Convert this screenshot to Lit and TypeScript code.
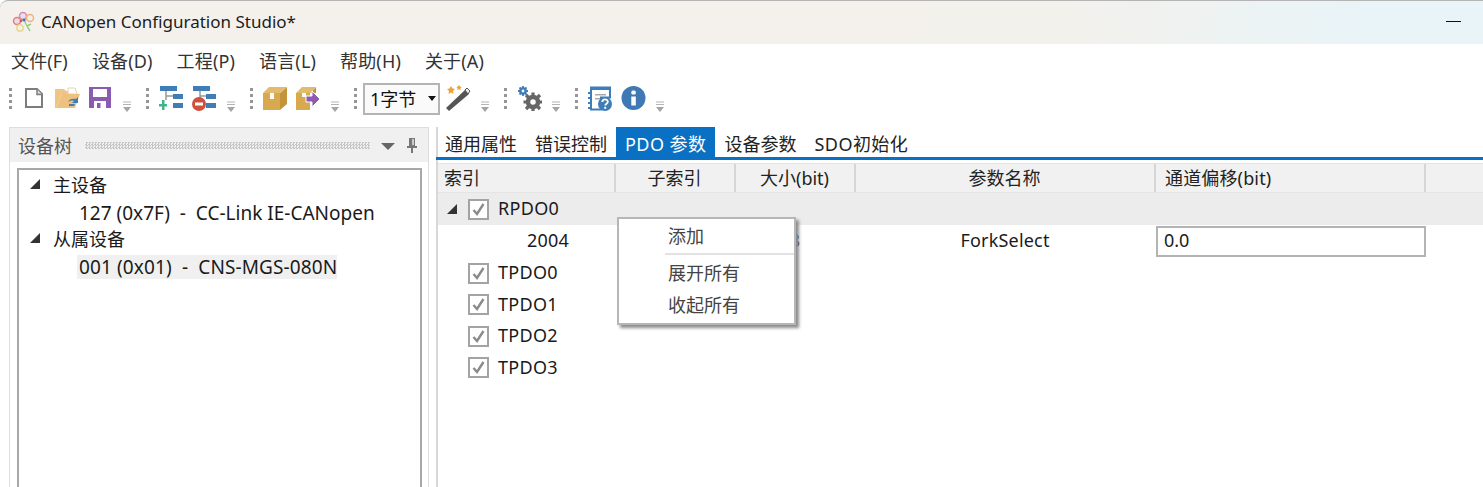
import { LitElement, html, css, svg } from "lit";
import { customElement } from "lit/decorators.js";

const ICONS: Record<string, unknown> = {
  doc: svg`<path d="M4 4h11l5 5v13H4z" fill="#fff" stroke="#7d7d7d" stroke-width="2"/><path d="M15 4v5.500h5" fill="#d8d8d8" stroke="#7d7d7d" stroke-width="1.500"/>`,
  open: svg`<path d="M0 10V4h9l2 2h9v3H7L1 23H0z" fill="#eec584"/><path d="M13 3h7l2 6h-9z" fill="#fff" stroke="#e6d2ac"/><path d="M1 23 7 9h18l-5 14z" fill="#eec27e"/><path d="M13 17c1-3 5-4 8-3l2-2v6h-6l2-2c-2-1-4 0-6 1zM14 19h6l-1 2h-5z" fill="#3f7fb5"/>`,
  save: svg`<path d="M1 2h22v21H1z" fill="#8a5bb0"/><path d="M5 4h14v8H5z" fill="#fff"/><path d="M6 16h12v7H6z" fill="#fff"/><path d="M9 18h3.500v5H9z" fill="#8a5bb0"/>`,
  add: svg`<path d="M1 1h17v5H1zM14 9h10v5H14zM14 18h10v5H14z" fill="#3e7db8"/><path d="M7 6v5h7M7 11v4" fill="none" stroke="#999" stroke-width="1.500"/><path d="M3 15h2.500v4H8v2.500H5.500V25H3v-3.500H0V19h3z" fill="#3fb58a"/>`,
  del: svg`<path d="M1 1h17v5H1zM14 9h10v5H14zM14 18h10v5H14z" fill="#3e7db8"/><path d="M8 6v5h6M8 11v2" fill="none" stroke="#999" stroke-width="1.500"/><circle cx="7" cy="19" r="7" fill="#d0503c"/><path d="M3 17.500h8v3H3z" fill="#fff"/>`,
  pkg: svg`<path d="M0 8h17v17H0z" fill="#d8a94e"/><path d="M17 8l7-6v17l-7 6z" fill="#c4943c"/><path d="M0 8l6-6h18l-7 6z" fill="#e3bb6c"/><path d="M7 8h4v6H7z" fill="#fff"/>`,
  exp: svg`<path d="M0 8h14v17H0z" fill="#d8a94e"/><path d="M14 8l6-6v6z" fill="#c4943c"/><path d="M0 8l6-6h14l-6 6z" fill="#e3bb6c"/><path d="M6 8h4v4H6z" fill="#fff"/><path d="M10 11h6V6l8 8-8 8v-5h-6z" fill="#8d5cb0" stroke="#fff"/>`,
  wand: svg`<path d="M0 23 19 5l4 4L3 26z" fill="#555"/><path d="M19 5l2-2 3 3-2 3z" fill="#eee" stroke="#555"/><path d="M5 1l1.500 2.500 2.500.5-2 2 .5 3-2.500-1.500L2.500 9 3 6 1 4l2.500-.5z" fill="#eba33c"/><path d="M13 0l1 1.500 1.500.5-1 1.200.2 1.800-1.700-.8-1.700.8.200-1.800-1-1.200 1.500-.5z" fill="#eba33c"/>`,
  gears: svg`<circle cx="16" cy="17" r="5" fill="none" stroke="#666" stroke-width="4.500"/><path d="M16 7.500v4M16 22.500v3.500M6.500 17h4M21.500 17h4M9 10l3 3M20 21l3 3M23 10l-3 3M12 21l-3 3" stroke="#666" stroke-width="3.200"/><circle cx="6" cy="6" r="2.600" fill="none" stroke="#3e7db8" stroke-width="2.400"/><path d="M6 1v2M6 9v2M1 6h2M9 6h2M2.500 2.500 4 4M8 8l1.500 1.500M9.500 2.500 8 4M4 8 2.500 9.500" stroke="#3e7db8" stroke-width="1.800"/>`,
  help: svg`<path d="M3 2.500h19v10H13v12H3z" fill="#fff" stroke="#3e7db8" stroke-width="2"/><path d="M2 2h21v3H2z" fill="#3e7db8"/><path d="M7 9h11v1.500H7zM7 13h5v1.500H7z" fill="#aaa"/><path d="M0 7h3v2H0zM0 12h3v2H0zM0 17h3v2H0zM0 22h3v2H0z" fill="#3e7db8"/><circle cx="17" cy="19" r="7" fill="#3e7db8"/><path d="M14.300 17c0-3.500 5.500-3.500 5.500-.2 0 2-2.500 2-2.500 3.700" fill="none" stroke="#fff" stroke-width="1.800"/><path d="M16.200 21.800h2v2h-2z" fill="#fff"/>`,
  info: svg`<circle cx="12.500" cy="13" r="12" fill="#3e79b4"/><rect x="10.300" y="5.500" width="4.500" height="4" rx="1.500" fill="#fff"/><path d="M10.300 11.500h4.500v9h-4.500z" fill="#fff"/>`,
};

const GROUPS = [
  ["doc", "open", "save"],
  ["add", "del"],
  ["pkg", "exp"],
  ["combo", "wand"],
  ["gears"],
  ["help", "info"],
];

const MENUS = ["文件(F)", "设备(D)", "工程(P)", "语言(L)", "帮助(H)", "关于(A)"];
const TABS = ["通用属性", "错误控制", "PDO 参数", "设备参数", "SDO初始化"];
const PDOS = ["TPDO0", "TPDO1", "TPDO2", "TPDO3"];

@customElement("app-root")
export class AppRoot extends LitElement {
  static styles = css`
    :host {
      display: flex;
      flex-direction: column;
      height: 487px;
      overflow: hidden;
      background: #fff;
      color: #1a1a1a;
      font-family: "Noto Sans", "Noto Sans CJK SC", sans-serif;
      font-size: 18px;
      position: relative;
    }
    .title {
      height: 44px;
      box-sizing: border-box;
      flex: none;
      display: flex;
      align-items: center;
      padding: 0 22px 2px 12px;
      border-top: 1px solid #b4b4b4;
      border-top-left-radius: 8px;
      background: linear-gradient(90deg, #f4f1ec 0%, #f4f1ec 60%, #f3f1ec 72%, #e9f4f8 92%, #e9f4f9 100%);
      color: #1c1c1c;
      font-size: 17px;
      line-height: 24px;
    }
    .logo { width: 24px; height: 24px; margin-right: 5px; flex: none; }
    .grow { flex: 1; }
    .min { width: 15px; height: 1px; background: #111; }
    .menu {
      height: 34px;
      box-sizing: border-box;
      flex: none;
      display: flex;
      align-items: center;
      gap: 24px;
      padding: 0 0 2px 11px;
      color: #333;
      letter-spacing: 0.15px;
    }
    .toolbar {
      height: 41px;
      flex: none;
      display: flex;
      align-items: center;
      gap: 8px;
      padding-left: 8px;
      box-sizing: border-box;
    }
    .group { display: flex; align-items: center; height: 36px; }
    .grip {
      width: 3px;
      height: 21px;
      margin: 0 6px 0 1px;
      background: repeating-linear-gradient(180deg, #969696 0 3px, transparent 3px 6px);
    }
    .tool { width: 33px; height: 36px; display: flex; align-items: center; justify-content: center; }
    .tool svg { width: 25px; height: 27px; }
    .more { width: 20px; height: 36px; display: flex; justify-content: center; }
    .more svg { width: 10px; height: 11px; margin-top: 20px; }
    .combo {
      width: 77px;
      height: 32px;
      margin-right: 2px;
      box-sizing: border-box;
      border: 2px solid #b4b4b4;
      background: #fafafa;
      display: flex;
      align-items: center;
      padding: 0 0 2px 5px;
      color: #111;
    }
    .combo-arrow {
      width: 0;
      height: 0;
      margin: 2px 2px 0 auto;
      border: 4px solid transparent;
      border-top: 5px solid #111;
      border-bottom: 0;
    }
    .main {
      flex: 1;
      display: flex;
      padding: 8px 0 0 9px;
      min-height: 0;
    }
    .dock {
      width: 420px;
      flex: none;
      box-sizing: border-box;
      border: 1px solid #dedede;
      border-bottom: 0;
      display: flex;
      flex-direction: column;
    }
    .dock-head {
      height: 34px;
      flex: none;
      background: #f0f0f0;
      display: flex;
      align-items: center;
      padding: 0 8px;
      color: #555;
    }
    .dots {
      flex: 1;
      height: 7px;
      margin: 0 11px 0 13px;
      background-image: conic-gradient(#c6c6c6 25%, transparent 0 50%, #c6c6c6 0 75%, transparent 0);
      background-size: 3px 3px;
    }
    .dock-menu { width: 0; height: 0; border: 7px solid transparent; border-top: 7px solid #666; border-bottom: 0; margin-right: 11px; margin-top: 3px; }
    .pin { width: 12px; height: 16px; margin-right: 2px; }
    .tree {
      flex: 1;
      margin: 6px 6px 0 7px;
      box-sizing: border-box;
      border: 2px solid #a8a8a8;
      border-bottom: 0;
      padding: 2px 0 0 11px;
      color: #1a1a1a;
    }
    .tnode { height: 27px; display: flex; align-items: center; }
    .tnode .head { margin-bottom: 2px; }
    .tleaf { padding-left: 49px; font-size: 19px; }
    .tri { width: 0; height: 0; border-style: solid; border-width: 0 0 10px 10px; border-color: transparent transparent #333 transparent; margin: 0 13px 3px 0; }
    .tn-text { line-height: 24px; }
    .tree .sel { background: #f0f0f0; margin-left: -2px; padding-left: 2px; letter-spacing: 0.12px; }
    .right { flex: 1; margin-left: 7px; border-left: 2px solid #d8d8d8; min-width: 0; display: flex; flex-direction: column; }
    .tabs {
      height: 30px;
      flex: none;
      display: flex;
      border-bottom: 3px solid #0a70c4;
      margin-left: -2px;
    }
    .tab { padding: 0 9px; line-height: 34px; height: 30px; color: #222; }
    .tab.wide { letter-spacing: 0.45px; }
    .tab.on { background: #0a70c4; color: #fff; }
    .cols { display: grid; grid-template-columns: 178px 120px 120px 300px 270px 1fr; }
    .thead { height: 30px; margin-top: 3px; flex: none; background: #f1f1f1; border-bottom: 1px solid #e4e4e4; border-top: 1px solid #e4e4e4; box-sizing: border-box; }
    .th { border-right: 2px solid #d6d6d6; text-align: center; line-height: 28px; color: #222; box-sizing: border-box; padding-right: 1px; }
    .th.l { text-align: left; padding-left: 6px; }
    .th.l2 { padding-left: 9px; letter-spacing: 0.15px; }
    .th:last-child { border-right: 0; }
    .rowhead, .rowitem { height: 31.5px; display: flex; align-items: center; }
    .rowhead { height: 32px; background: #ececec; padding-left: 9px; }
    .rowhead .tri { margin: 0 11px 1px 0; }
    .rowitem { padding-left: 30px; }
    .rowhead .lab { margin-bottom: 3px; letter-spacing: 0.3px; }
    .rowitem .lab { margin-bottom: 2px; letter-spacing: 0.3px; }
    .check { width: 21px; height: 21px; box-sizing: border-box; border: 2px solid #a3a3a3; background: #fff; margin-right: 9px; display: flex; align-items: center; justify-content: center; }
    .check svg { width: 15px; height: 15px; }
    .param { height: 32.5px; align-items: center; }
    .param > div { text-align: center; margin-bottom: 2px; padding-right: 2px; letter-spacing: 0.2px; }
    .param .idx { text-align: left; padding-left: 89px; padding-right: 0; }
    .param .cell-input { margin-bottom: 0; padding-right: 0; }
    .param input {
      width: 270px;
      height: 31px;
      box-sizing: border-box;
      border: 2px solid #b4b4b4;
      font: inherit;
      color: #1a1a1a;
      padding: 0 6px 2px;
      display: block;
      margin: 0;
      outline: none;
      background: #fff;
    }
    .ctx {
      position: absolute;
      left: 617px;
      top: 217px;
      width: 179px;
      height: 108px;
      box-sizing: border-box;
      border: 2px solid #b6b6b6;
      background: #fff;
      box-shadow: 3px 3px 3px #8c8c8c;
      color: #444;
      padding-top: 2px;
    }
    .ctx div.item { height: 32px; line-height: 31px; padding-left: 49px; }
    .ctx .sep { height: 2px; background: #e2e2e2; margin: 0 0 3px 46px; }
  `;

  private icon(name: string) {
    if (name === "combo") {
      return html`<div class="combo"><span>1字节</span><i class="combo-arrow"></i></div>`;
    }
    return html`<div class="tool"><svg viewBox="0 0 25 27">${ICONS[name]}</svg></div>`;
  }

  private more() {
    return html`<div class="more"><svg viewBox="0 0 10 11"><path d="M1 1h8M1 3.500h8" stroke="#b5b5b5" stroke-width="1"/><path d="M1 6h8l-4 5z" fill="#a5a5a5"/></svg></div>`;
  }

  private check() {
    return html`<span class="check"><svg viewBox="0 0 15 15"><path d="M2.500 8l3.500 4 6.500-10" fill="none" stroke="#8a8a8a" stroke-width="2.400"/></svg></span>`;
  }

  render() {
    return html`
      <div class="title">
        <svg class="logo" viewBox="0 0 24 24" fill="none" stroke-width="1.500">
          <circle cx="11" cy="6" r="3.500" stroke="#d98aa8" fill="#e8e0ef"/>
          <circle cx="18" cy="8" r="3.500" stroke="#eeb27a"/>
          <circle cx="5" cy="11" r="3.500" stroke="#e0808a" fill="#f3d9dc"/>
          <circle cx="8" cy="18" r="3.200" stroke="#e6d98a"/>
          <path d="M12 10l3 6 3 5M15 16l4-2" stroke="#9ccc8c"/>
          <circle cx="12" cy="10" r="1.600" fill="#4a6fb5" stroke="none"/>
          <circle cx="9" cy="11" r="1.200" fill="#d05060" stroke="none"/>
        </svg>
        <span>CANopen Configuration Studio*</span>
        <div class="grow"></div>
        <div class="min"></div>
      </div>
      <div class="menu">${MENUS.map((m) => html`<span>${m}</span>`)}</div>
      <div class="toolbar">
        ${GROUPS.map(
          (g) => html`<div class="group"><div class="grip"></div>${g.map((n) => this.icon(n))}${this.more()}</div>`
        )}
      </div>
      <div class="main">
        <section class="dock">
          <div class="dock-head">
            <span>设备树</span>
            <div class="dots"></div>
            <i class="dock-menu"></i>
            <svg class="pin" viewBox="0 0 12 16"><path d="M3 1h6v8H3zM1 9h10v2H1zM5 11h2v5H5z" fill="#777"/><path d="M6 2h2v6H6z" fill="#ccc"/></svg>
          </div>
          <div class="tree">
            <div class="tnode"><i class="tri"></i><span class="tn-text head">主设备</span></div>
            <div class="tnode tleaf"><span class="tn-text">127 (0x7F)&nbsp; -&nbsp; CC-Link IE-CANopen</span></div>
            <div class="tnode"><i class="tri"></i><span class="tn-text head">从属设备</span></div>
            <div class="tnode tleaf"><span class="tn-text sel">001 (0x01)&nbsp; -&nbsp; CNS-MGS-080N</span></div>
          </div>
        </section>
        <section class="right">
          <div class="tabs">
            ${TABS.map(
              (t, i) => html`<div class="tab ${i === 2 ? "on wide" : i === 4 ? "wide" : ""}">${t}</div>`
            )}
          </div>
          <div class="thead cols">
            <div class="th l">索引</div>
            <div class="th">子索引</div>
            <div class="th">大小(bit)</div>
            <div class="th">参数名称</div>
            <div class="th l l2">通道偏移(bit)</div>
            <div class="th"></div>
          </div>
          <div class="rowhead"><i class="tri"></i>${this.check()}<span class="lab">RPDO0</span></div>
          <div class="cols param">
            <div class="idx">2004</div>
            <div></div>
            <div>8</div>
            <div>ForkSelect</div>
            <div class="cell-input"><input .value=${"0.0"} /></div>
          </div>
          ${PDOS.map((p) => html`<div class="rowitem">${this.check()}<span class="lab">${p}</span></div>`)}
        </section>
      </div>
      <div class="ctx">
        <div class="item">添加</div>
        <div class="sep"></div>
        <div class="item">展开所有</div>
        <div class="item">收起所有</div>
      </div>
    `;
  }
}
